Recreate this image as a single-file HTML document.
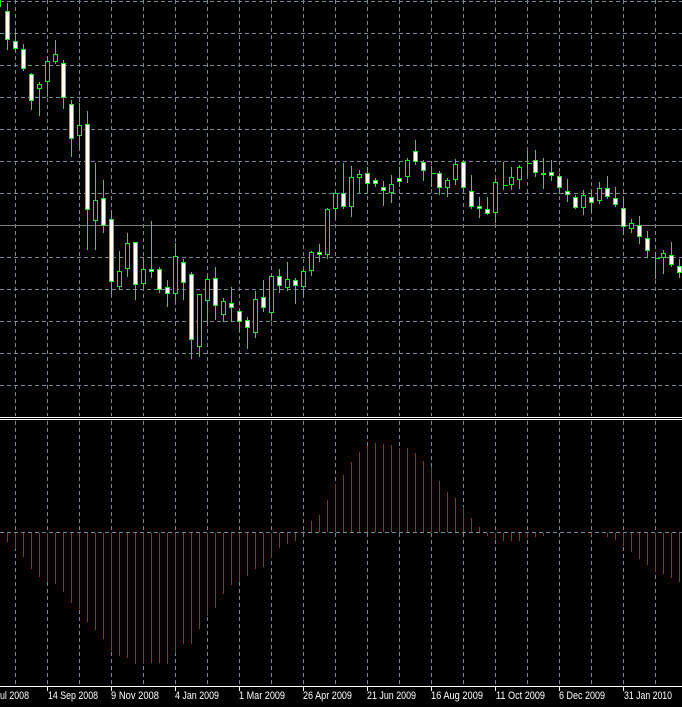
<!DOCTYPE html>
<html><head><meta charset="utf-8"><style>
html,body{margin:0;padding:0;background:#000;width:682px;height:707px;overflow:hidden}
svg{display:block}
text{font-family:"Liberation Sans",sans-serif;font-size:11px;fill:#fff}
</style></head><body>
<svg width="682" height="707" viewBox="0 0 682 707" xmlns="http://www.w3.org/2000/svg">
<rect width="682" height="707" fill="#000"/>
<g stroke="#778899" stroke-width="1" stroke-dasharray="4,3" fill="none">
<path d="M15.5 0V416M47.5 0V416M79.5 0V416M111.5 0V416M143.5 0V416M175.5 0V416M207.5 0V416M239.5 0V416M271.5 0V416M303.5 0V416M335.5 0V416M367.5 0V416M399.5 0V416M431.5 0V416M463.5 0V416M495.5 0V416M527.5 0V416M559.5 0V416M591.5 0V416M623.5 0V416M655.5 0V416"/>
<path d="M15.5 421V686M47.5 421V686M79.5 421V686M111.5 421V686M143.5 421V686M175.5 421V686M207.5 421V686M239.5 421V686M271.5 421V686M303.5 421V686M335.5 421V686M367.5 421V686M399.5 421V686M431.5 421V686M463.5 421V686M495.5 421V686M527.5 421V686M559.5 421V686M591.5 421V686M623.5 421V686M655.5 421V686"/>
<path d="M0 1.5H682M0 33.5H682M0 65.5H682M0 97.5H682M0 129.5H682M0 161.5H682M0 193.5H682M0 257.5H682M0 289.5H682M0 321.5H682M0 353.5H682M0 385.5H682M0 532.5H682"/>
</g>
<path d="M0 225.5H682" stroke="#808080" stroke-width="1"/>
<path d="M0 417.5H682M0 419.5H682M0 686.5H682" stroke="#fff" stroke-width="1"/>
<path d="M47.5 686V691M111.5 686V691M175.5 686V691M239.5 686V691M303.5 686V691M367.5 686V691M431.5 686V691M495.5 686V691M559.5 686V691M623.5 686V691" stroke="#fff"/>
<!-- histogram -->
<g fill="#f00">
<rect x="7" y="533" width="1" height="9"/><rect x="15" y="533" width="1" height="16"/><rect x="23" y="533" width="1" height="24"/><rect x="31" y="533" width="1" height="36"/><rect x="39" y="533" width="1" height="44"/><rect x="47" y="533" width="1" height="49"/><rect x="55" y="533" width="1" height="51"/><rect x="63" y="533" width="1" height="59"/><rect x="71" y="533" width="1" height="70"/><rect x="79" y="533" width="1" height="76"/><rect x="87" y="533" width="1" height="89"/><rect x="95" y="533" width="1" height="97"/><rect x="103" y="533" width="1" height="106"/><rect x="111" y="533" width="1" height="118"/><rect x="119" y="533" width="1" height="123"/><rect x="127" y="533" width="1" height="125"/><rect x="135" y="533" width="1" height="131"/><rect x="143" y="533" width="1" height="131"/><rect x="151" y="533" width="1" height="130"/><rect x="159" y="533" width="1" height="130"/><rect x="167" y="533" width="1" height="131"/><rect x="175" y="533" width="1" height="120"/><rect x="183" y="533" width="1" height="111"/><rect x="191" y="533" width="1" height="111"/><rect x="199" y="533" width="1" height="96"/><rect x="207" y="533" width="1" height="83"/><rect x="215" y="533" width="1" height="75"/><rect x="223" y="533" width="1" height="61"/><rect x="231" y="533" width="1" height="52"/><rect x="239" y="533" width="1" height="49"/><rect x="247" y="533" width="1" height="43"/><rect x="255" y="533" width="1" height="36"/><rect x="263" y="533" width="1" height="34"/><rect x="271" y="533" width="1" height="25"/><rect x="279" y="533" width="1" height="15"/><rect x="287" y="533" width="1" height="11"/><rect x="295" y="533" width="1" height="8"/>
<rect x="303" y="531" width="1" height="1"/><rect x="311" y="521" width="1" height="11"/><rect x="319" y="515" width="1" height="17"/><rect x="327" y="500" width="1" height="32"/><rect x="335" y="484" width="1" height="48"/><rect x="343" y="475" width="1" height="57"/><rect x="351" y="462" width="1" height="70"/><rect x="359" y="452" width="1" height="80"/><rect x="367" y="446" width="1" height="86"/><rect x="375" y="443" width="1" height="89"/><rect x="383" y="444" width="1" height="88"/><rect x="391" y="445" width="1" height="87"/><rect x="399" y="448" width="1" height="84"/><rect x="407" y="448" width="1" height="84"/><rect x="415" y="453" width="1" height="79"/><rect x="423" y="461" width="1" height="71"/><rect x="431" y="467" width="1" height="65"/><rect x="439" y="481" width="1" height="51"/><rect x="447" y="492" width="1" height="40"/><rect x="455" y="498" width="1" height="34"/><rect x="463" y="507" width="1" height="25"/><rect x="471" y="518" width="1" height="14"/><rect x="479" y="527" width="1" height="5"/>
<rect x="487" y="533" width="1" height="3"/><rect x="495" y="533" width="1" height="6"/><rect x="503" y="533" width="1" height="8"/><rect x="511" y="533" width="1" height="8"/><rect x="519" y="533" width="1" height="8"/><rect x="527" y="533" width="1" height="5"/><rect x="535" y="533" width="1" height="4"/><rect x="543" y="533" width="1" height="3"/><rect x="591" y="533" width="1" height="2"/><rect x="607" y="533" width="1" height="4"/><rect x="615" y="533" width="1" height="7"/><rect x="623" y="533" width="1" height="13"/><rect x="631" y="533" width="1" height="19"/><rect x="639" y="533" width="1" height="26"/><rect x="647" y="533" width="1" height="32"/><rect x="655" y="533" width="1" height="39"/><rect x="663" y="533" width="1" height="41"/><rect x="671" y="533" width="1" height="45"/><rect x="679" y="533" width="1" height="49"/>
</g>
<!-- candles: wicks -->
<path stroke="#0f0" stroke-width="1" fill="none" d="M7.5 3V50M15.5 32V51M23.5 44V71M31.5 73V110M39.5 82V116M47.5 57V97M55.5 40V64M63.5 60V109M71.5 100V157M79.5 103V148M87.5 111V250M95.5 163V250M103.5 180V233M111.5 210V295M119.5 251V290M127.5 233V277M135.5 242V300M143.5 258V288M151.5 221V278M159.5 267V293M167.5 280V307M175.5 243V302M183.5 259V300M191.5 272V359M199.5 294V357M207.5 275V326M215.5 267V320M223.5 298V322M231.5 287V322M239.5 309V331M247.5 317V349M255.5 291V338M263.5 280V312M271.5 275V321M279.5 269V293M287.5 262V291M295.5 278V304M303.5 269V297M311.5 251V276M319.5 244V262M327.5 208V259M335.5 192V219M343.5 163V209M351.5 166V217M359.5 170V193M367.5 167V193M375.5 178V187M383.5 181V206M391.5 175V203M399.5 167V187M407.5 158V183M415.5 140V165M423.5 160V181M431.5 166V187M439.5 171V195M447.5 178V197M455.5 159V185M463.5 160V192M471.5 175V209M479.5 197V218M487.5 197V215M495.5 179V223M503.5 162V190M511.5 167V190M519.5 165V189M527.5 151V175M535.5 150V177M543.5 158V189M551.5 160V181M559.5 173V194M567.5 179V202M575.5 195V209M583.5 190V215M591.5 190V212M599.5 182V204M607.5 176V199M615.5 187V207M623.5 198V235M631.5 219V233M639.5 216V244M647.5 231V258M655.5 252V279M663.5 250V274M671.5 242V267M679.5 259V278M-0.5 0V8M431 173.5H436M503 185.5H508M527 163.5H532M655 258.5H660"/>
<!-- bodies -->
<g stroke="#0f0" stroke-width="1">
<g fill="#fff">
<rect x="-3.5" y="-1.5" width="4" height="8"/>
<rect x="5.5" y="11.5" width="4" height="28"/><rect x="13.5" y="41.5" width="4" height="7"/><rect x="21.5" y="49.5" width="4" height="19"/><rect x="29.5" y="74.5" width="4" height="26"/><rect x="61.5" y="63.5" width="4" height="34"/><rect x="69.5" y="104.5" width="4" height="34"/><rect x="85.5" y="124.5" width="4" height="85"/><rect x="101.5" y="198.5" width="4" height="27"/><rect x="109.5" y="219.5" width="4" height="62"/><rect x="133.5" y="242.5" width="4" height="42"/><rect x="149.5" y="269.5" width="4" height="2"/><rect x="157.5" y="269.5" width="4" height="20"/><rect x="165.5" y="287.5" width="4" height="6"/><rect x="181.5" y="262.5" width="4" height="20"/><rect x="189.5" y="274.5" width="4" height="65"/><rect x="213.5" y="278.5" width="4" height="27"/><rect x="229.5" y="303.5" width="4" height="4"/><rect x="237.5" y="311.5" width="4" height="10"/><rect x="245.5" y="320.5" width="4" height="7"/><rect x="261.5" y="297.5" width="4" height="10"/><rect x="277.5" y="276.5" width="4" height="9"/><rect x="293.5" y="280.5" width="4" height="5"/><rect x="317.5" y="252.5" width="4" height="2"/><rect x="341.5" y="193.5" width="4" height="13"/><rect x="365.5" y="173.5" width="4" height="10"/><rect x="373.5" y="180.5" width="4" height="3"/><rect x="381.5" y="187.5" width="4" height="3"/><rect x="397.5" y="178.5" width="4" height="3"/><rect x="413.5" y="151.5" width="4" height="10"/><rect x="421.5" y="162.5" width="4" height="8"/><rect x="437.5" y="173.5" width="4" height="14"/><rect x="461.5" y="162.5" width="4" height="25"/><rect x="469.5" y="191.5" width="4" height="15"/><rect x="477.5" y="206.5" width="4" height="2"/><rect x="485.5" y="209.5" width="4" height="4"/><rect x="533.5" y="160.5" width="4" height="12"/><rect x="549.5" y="172.5" width="4" height="3"/><rect x="557.5" y="176.5" width="4" height="11"/><rect x="565.5" y="191.5" width="4" height="3"/><rect x="573.5" y="197.5" width="4" height="10"/><rect x="589.5" y="197.5" width="4" height="5"/><rect x="605.5" y="188.5" width="4" height="8"/><rect x="613.5" y="198.5" width="4" height="6"/><rect x="621.5" y="208.5" width="4" height="18"/><rect x="637.5" y="225.5" width="4" height="11"/><rect x="645.5" y="238.5" width="4" height="12"/><rect x="669.5" y="255.5" width="4" height="9"/><rect x="677.5" y="266.5" width="4" height="6"/>
</g>
<g fill="#000">
<rect x="37.5" y="84.5" width="4" height="4"/><rect x="45.5" y="61.5" width="4" height="20"/><rect x="53.5" y="54.5" width="4" height="7"/><rect x="77.5" y="125.5" width="4" height="10"/><rect x="93.5" y="200.5" width="4" height="20"/><rect x="117.5" y="271.5" width="4" height="15"/><rect x="125.5" y="243.5" width="4" height="25"/><rect x="141.5" y="269.5" width="4" height="14"/><rect x="173.5" y="256.5" width="4" height="37"/><rect x="197.5" y="294.5" width="4" height="52"/><rect x="205.5" y="279.5" width="4" height="21"/><rect x="221.5" y="301.5" width="4" height="13"/><rect x="253.5" y="299.5" width="4" height="33"/><rect x="269.5" y="276.5" width="4" height="36"/><rect x="285.5" y="279.5" width="4" height="8"/><rect x="301.5" y="271.5" width="4" height="15"/><rect x="309.5" y="252.5" width="4" height="18"/><rect x="325.5" y="209.5" width="4" height="45"/><rect x="333.5" y="193.5" width="4" height="15"/><rect x="349.5" y="177.5" width="4" height="29"/><rect x="357.5" y="174.5" width="4" height="3"/><rect x="389.5" y="184.5" width="4" height="8"/><rect x="405.5" y="160.5" width="4" height="16"/><rect x="445.5" y="180.5" width="4" height="7"/><rect x="453.5" y="164.5" width="4" height="15"/><rect x="493.5" y="182.5" width="4" height="30"/><rect x="509.5" y="177.5" width="4" height="7"/><rect x="517.5" y="167.5" width="4" height="12"/><rect x="541.5" y="173.5" width="4" height="1"/><rect x="581.5" y="195.5" width="4" height="12"/><rect x="597.5" y="188.5" width="4" height="12"/><rect x="629.5" y="223.5" width="4" height="5"/><rect x="661.5" y="253.5" width="4" height="4"/>
</g>
</g>
<!-- labels -->
<text x="0" y="699" textLength="29" lengthAdjust="spacingAndGlyphs">ul 2008</text>
<text x="48" y="699" textLength="50" lengthAdjust="spacingAndGlyphs">14 Sep 2008</text>
<text x="111" y="699" textLength="48" lengthAdjust="spacingAndGlyphs">9 Nov 2008</text>
<text x="175" y="699" textLength="44" lengthAdjust="spacingAndGlyphs">4 Jan 2009</text>
<text x="239" y="699" textLength="46" lengthAdjust="spacingAndGlyphs">1 Mar 2009</text>
<text x="303" y="699" textLength="49" lengthAdjust="spacingAndGlyphs">26 Apr 2009</text>
<text x="367" y="699" textLength="49" lengthAdjust="spacingAndGlyphs">21 Jun 2009</text>
<text x="431" y="699" textLength="52" lengthAdjust="spacingAndGlyphs">16 Aug 2009</text>
<text x="496" y="699" textLength="49" lengthAdjust="spacingAndGlyphs">11 Oct 2009</text>
<text x="559" y="699" textLength="46" lengthAdjust="spacingAndGlyphs">6 Dec 2009</text>
<text x="624" y="699" textLength="48" lengthAdjust="spacingAndGlyphs">31 Jan 2010</text>
</svg>
</body></html>
